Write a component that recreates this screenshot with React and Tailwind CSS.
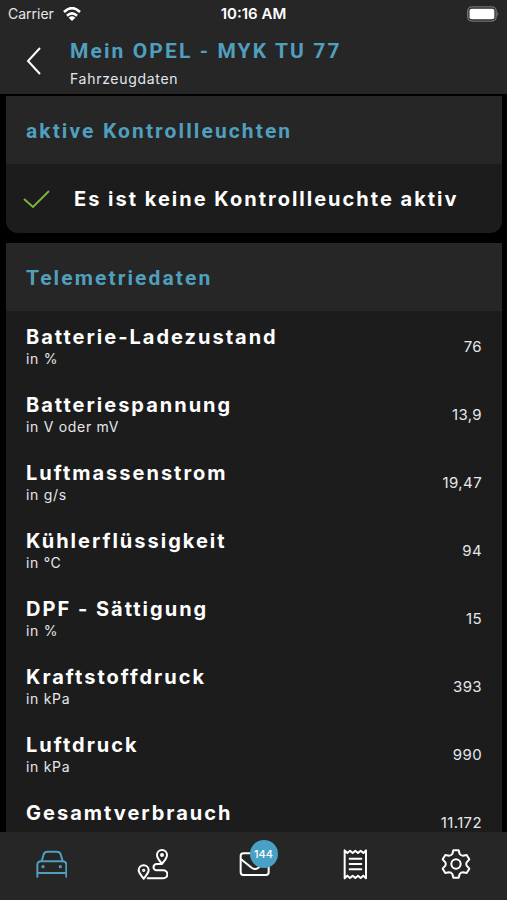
import React, { useState } from "react";

const telemetry = [
  { name: "Batterie-Ladezustand", unit: "in %", value: "76" },
  { name: "Batteriespannung", unit: "in V oder mV", value: "13,9" },
  { name: "Luftmassenstrom", unit: "in g/s", value: "19,47" },
  { name: "Kühlerflüssigkeit", unit: "in °C", value: "94" },
  { name: "DPF - Sättigung", unit: "in %", value: "15" },
  { name: "Kraftstoffdruck", unit: "in kPa", value: "393" },
  { name: "Luftdruck", unit: "in kPa", value: "990" },
  { name: "Gesamtverbrauch", unit: "", value: "11.172" },
];

const Icon = ({ children }) => (
  <svg
    viewBox="0 0 96 96"
    className="size-8"
    fill="none"
    stroke="currentColor"
    strokeWidth="6"
    strokeLinecap="round"
    strokeLinejoin="round"
    aria-hidden="true"
  >
    {children}
  </svg>
);

const CarIcon = () => (
  <Icon>
    <path d="M7 86V52Q7 40 19 40H82Q94 40 94 52V86M7 75H94" />
    <path d="M20 40L26 19Q29 11 37 11H66Q74 11 77 19L83 40" />
    <circle cx="24" cy="56" r="2" />
    <circle cx="76" cy="56" r="2" />
  </Icon>
);

const RouteIcon = () => (
  <Icon>
    <path d="M78 48C72 39 63 31 63 21A15 15 0 0 1 93 21C93 31 84 39 78 48Z" />
    <circle cx="78" cy="21" r="3" />
    <path d="M23 92C17 83 8 76 8 67A15 15 0 0 1 38 67C38 76 29 83 23 92Z" />
    <circle cx="23" cy="67" r="2" />
    <path d="M76 48H62A9 9 0 0 0 62 67H82A12 12 0 0 1 82 91H35" />
  </Icon>
);

const MailIcon = () => (
  <Icon>
    <rect x="8" y="16" width="84" height="65" rx="8" />
    <path d="M9 34L42 60Q51 66 60 60L92 34" />
  </Icon>
);

const ReceiptIcon = () => (
  <Icon>
    <path d="M17 7L25 15L33 8L41 15L49 8L57 15L65 8L73 15L81 7V91L73 83L65 90L57 83L49 90L41 83L33 90L25 83L17 91Z" />
    <path d="M32 32H67M32 48H67M32 64H67" />
  </Icon>
);

const GearIcon = () => (
  <Icon>
    <path d="M40 7H56L59 18Q63 23 69 23L80 21L88 34L80 43Q77 48 80 53L88 62L80 75L69 73Q63 73 59 78L56 89H40L37 78Q33 73 27 73L16 75L8 62L16 53Q19 48 16 43L8 34L16 21L27 23Q33 23 37 18Z" />
    <circle cx="48" cy="48" r="14" />
  </Icon>
);

const StatusBar = () => (
  <div className="grid grid-cols-3 items-center px-2 pt-1 leading-5">
    <div className="flex items-center gap-2 text-sm text-gray-200">
      Carrier
      <svg viewBox="0 0 54 42" className="h-3.5 w-5" fill="none" stroke="white" strokeWidth="8" aria-hidden="true">
        <path d="M3 15Q27 -8 51 15" />
        <path d="M12 26Q27 12 42 26" />
        <path d="M27 42L17 32Q27 24 37 32Z" fill="white" stroke="none" />
      </svg>
    </div>
    <p className="text-center text-[15px] font-semibold text-white">10:16 AM</p>
    <svg viewBox="0 0 90 44" className="h-4 w-8 justify-self-end" aria-hidden="true">
      <rect x="2" y="2" width="80" height="40" rx="12" fill="none" stroke="#727272" strokeWidth="4" />
      <rect x="7" y="7" width="70" height="30" rx="6" fill="white" />
      <path d="M85 15Q91 22 85 29Z" fill="#727272" />
    </svg>
  </div>
);

const CardTitle = ({ children }) => (
  <h2 className="bg-[#262626] px-5 pt-[21px] pb-[19px] font-['Roboto',sans-serif] text-[21px] leading-7 font-bold tracking-widest text-[#519fbe]">
    {children}
  </h2>
);

const NavButton = ({ id, label, active, onSelect, children }) => (
  <button
    type="button"
    aria-label={label}
    onClick={() => onSelect(id)}
    className={`flex flex-1 items-center justify-center ${active === id ? "text-[#519fbe]" : "text-white"}`}
  >
    {children}
  </button>
);

const App = () => {
  const [active, setActive] = useState("car");

  return (
    <div className="flex h-screen flex-col bg-black font-['Inter',sans-serif] text-white">
      <header className="bg-[#262626] pb-[5px]">
        <StatusBar />
        <div className="flex items-center pt-[9px]">
          <button type="button" aria-label="Zurück" className="flex w-[68px] justify-center">
            <svg viewBox="0 0 16 28" className="h-7 w-4" fill="none" stroke="white" strokeWidth="2" aria-hidden="true">
              <path d="M14 1L2 14L14 27" />
            </svg>
          </button>
          <div className="pl-0.5">
            <h1 className="font-['Roboto',sans-serif] text-[21px] leading-9 font-bold tracking-widest text-[#519fbe]">
              Mein OPEL - MYK TU 77
            </h1>
            <p className="text-sm leading-5 tracking-wider text-gray-200">Fahrzeugdaten</p>
          </div>
        </div>
      </header>

      <main className="flex min-h-0 flex-1 flex-col gap-2.5 overflow-y-auto pt-0.5 pr-[5px] pl-1.5 [scrollbar-width:none]">
        <section className="shrink-0 overflow-hidden rounded-b-xl bg-[#1c1c1c]">
          <CardTitle>aktive Kontrollleuchten</CardTitle>
          <div className="flex items-center gap-6 px-4 pt-[21px] pb-5">
            <svg viewBox="0 0 28 20" className="h-5 w-7" fill="none" stroke="#7cb342" strokeWidth="2" aria-hidden="true">
              <path d="M2 10L11 18L27 2" />
            </svg>
            <p className="text-xl leading-7 font-bold tracking-widest">Es ist keine Kontrollleuchte aktiv</p>
          </div>
        </section>

        <section className="shrink-0 bg-[#1c1c1c]">
          <CardTitle>Telemetriedaten</CardTitle>
          <ul className="pt-0.5">
            {telemetry.map((item) => (
              <li key={item.name} className="flex items-center justify-between px-5 py-3">
                <div>
                  <p className="text-xl leading-6 font-bold tracking-widest">{item.name}</p>
                  <p className="min-h-5 text-sm leading-5 tracking-wider text-gray-200">{item.unit}</p>
                </div>
                <p className="text-[15px] leading-5 tracking-wide text-gray-200">{item.value}</p>
              </li>
            ))}
          </ul>
        </section>
      </main>

      <nav className="flex h-17 shrink-0 bg-[#262626] pb-1">
        <NavButton id="car" label="Fahrzeug" active={active} onSelect={setActive}>
          <CarIcon />
        </NavButton>
        <NavButton id="route" label="Fahrten" active={active} onSelect={setActive}>
          <RouteIcon />
        </NavButton>
        <NavButton id="mail" label="Nachrichten" active={active} onSelect={setActive}>
          <span className="relative">
            <MailIcon />
            <span className="absolute -top-2 left-3 flex size-7 items-center justify-center rounded-full bg-[#48a0c4] text-[11px] font-medium text-white">
              144
            </span>
          </span>
        </NavButton>
        <NavButton id="receipt" label="Belege" active={active} onSelect={setActive}>
          <ReceiptIcon />
        </NavButton>
        <NavButton id="settings" label="Einstellungen" active={active} onSelect={setActive}>
          <GearIcon />
        </NavButton>
      </nav>
    </div>
  );
};

export default App;
